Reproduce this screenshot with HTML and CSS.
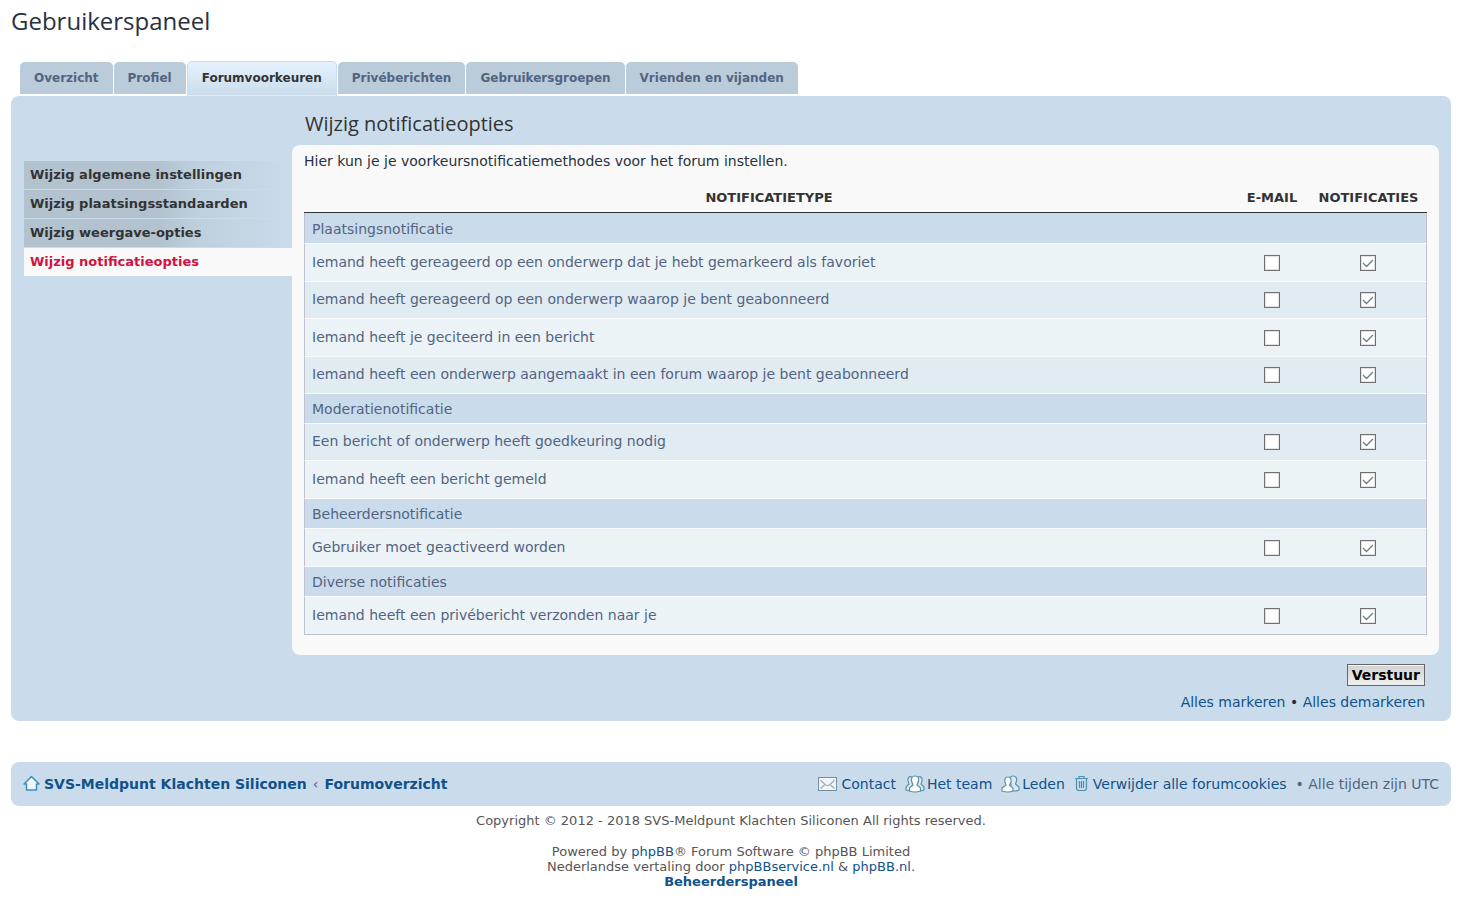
FILE: index.html
```html
<!DOCTYPE html>
<html lang="nl">
<head>
  <meta charset="UTF-8">
  <title>Gebruikerspaneel</title>
  <link rel="stylesheet" href="styles.css">
</head>
<body>

  <h1>Gebruikerspaneel</h1>

  <nav class="tabs">
    <a href="#">Overzicht</a>
    <a href="#">Profiel</a>
    <a href="#" class="active">Forumvoorkeuren</a>
    <a href="#">Privéberichten</a>
    <a href="#">Gebruikersgroepen</a>
    <a href="#">Vrienden en vijanden</a>
  </nav>

  <form class="panel">
    <nav class="menu">
      <a href="#">Wijzig algemene instellingen</a>
      <a href="#">Wijzig plaatsingsstandaarden</a>
      <a href="#">Wijzig weergave-opties</a>
      <a href="#" class="active">Wijzig notificatieopties</a>
    </nav>

    <main class="main">
      <h2>Wijzig notificatieopties</h2>

      <div class="content">
        <p>Hier kun je je voorkeursnotificatiemethodes voor het forum instellen.</p>

        <table>
          <thead>
            <tr>
              <th>Notificatietype</th>
              <th class="email" id="email">E-mail</th>
              <th class="board" id="board">Notificaties</th>
            </tr>
          </thead>
          <tbody>
            <tr class="section"><td colspan="3">Plaatsingsnotificatie</td></tr>
            <tr class="bg1">
              <td id="n1">Iemand heeft gereageerd op een onderwerp dat je hebt gemarkeerd als favoriet</td>
              <td><input type="checkbox" aria-labelledby="n1 email"></td>
              <td><input type="checkbox" aria-labelledby="n1 board" checked></td>
            </tr>
            <tr class="bg2">
              <td id="n2">Iemand heeft gereageerd op een onderwerp waarop je bent geabonneerd</td>
              <td><input type="checkbox" aria-labelledby="n2 email"></td>
              <td><input type="checkbox" aria-labelledby="n2 board" checked></td>
            </tr>
            <tr class="bg1">
              <td id="n3">Iemand heeft je geciteerd in een bericht</td>
              <td><input type="checkbox" aria-labelledby="n3 email"></td>
              <td><input type="checkbox" aria-labelledby="n3 board" checked></td>
            </tr>
            <tr class="bg2">
              <td id="n4">Iemand heeft een onderwerp aangemaakt in een forum waarop je bent geabonneerd</td>
              <td><input type="checkbox" aria-labelledby="n4 email"></td>
              <td><input type="checkbox" aria-labelledby="n4 board" checked></td>
            </tr>
            <tr class="section"><td colspan="3">Moderatienotificatie</td></tr>
            <tr class="bg2">
              <td id="n5">Een bericht of onderwerp heeft goedkeuring nodig</td>
              <td><input type="checkbox" aria-labelledby="n5 email"></td>
              <td><input type="checkbox" aria-labelledby="n5 board" checked></td>
            </tr>
            <tr class="bg1">
              <td id="n6">Iemand heeft een bericht gemeld</td>
              <td><input type="checkbox" aria-labelledby="n6 email"></td>
              <td><input type="checkbox" aria-labelledby="n6 board" checked></td>
            </tr>
            <tr class="section"><td colspan="3">Beheerdersnotificatie</td></tr>
            <tr class="bg1">
              <td id="n7">Gebruiker moet geactiveerd worden</td>
              <td><input type="checkbox" aria-labelledby="n7 email"></td>
              <td><input type="checkbox" aria-labelledby="n7 board" checked></td>
            </tr>
            <tr class="section"><td colspan="3">Diverse notificaties</td></tr>
            <tr class="bg1">
              <td id="n8">Iemand heeft een privébericht verzonden naar je</td>
              <td><input type="checkbox" aria-labelledby="n8 email"></td>
              <td><input type="checkbox" aria-labelledby="n8 board" checked></td>
            </tr>
          </tbody>
        </table>
      </div>

      <div class="actions">
        <button type="button">Verstuur</button>
        <div><a href="#">Alles markeren</a> • <a href="#">Alles demarkeren</a></div>
      </div>
    </main>
  </form>

  <footer>
    <div class="navbar">
      <div class="crumbs">
        <svg width="17" height="18" viewBox="0 0 17 18">
          <path d="M8.500 1.500 16 9H13.500V15H3.500V9H1Z" fill="#f4f4f4" stroke="#3792c0" stroke-width="1.500" stroke-linejoin="round"/>
        </svg>
        <a href="#">SVS-Meldpunt Klachten Siliconen</a>
        <span>‹</span>
        <a href="#">Forumoverzicht</a>
      </div>
      <ul class="links">
        <li>
          <svg width="19" height="15" viewBox="0 0 19 15">
            <rect x=".5" y=".5" width="18" height="13" fill="#f3f5f6" stroke="#6c8fa5"/>
            <path d="M2.500 3 7 7.500Q9.500 9.500 12 7.500L16.500 3M2.500 11.500 6.500 8M16.500 11.500 12.500 8" fill="none" stroke="#9fb0bb" stroke-width="1.300"/>
          </svg>
          <a href="#">Contact</a>
        </li>
        <li class="people">
          <svg width="20" height="18" viewBox="0 0 20 18">
            <g fill="#dce9f1" stroke="#5b91ad" stroke-width="1.200">
              <path d="M7 2C4 1 2.500 3 3 6L4 9 1 12V15L5 16"/>
              <path d="M13 2C16 1 17.500 3 17 6L16 9 19 12V15L15 16"/>
              <path fill="#fff" d="M10 1C7 1 6 3 6.500 6L8 10 4.500 13V16Q10 18 15.500 16V13L12 10 13.500 6C14 3 13 1 10 1Z"/>
            </g>
          </svg>
          <a href="#">Het team</a>
        </li>
        <li class="people">
          <svg width="19" height="18" viewBox="0 0 19 18">
            <g fill="#dce9f1" stroke="#5b91ad" stroke-width="1.200">
              <path d="M12 1C9 1 8.500 3 9 6L10 9 9 15Q14 17 18 15V12L14.500 9 15.500 6C16 3 15 1 12 1Z"/>
              <path fill="#fff" d="M7 2C4 2 3.500 4 4 7L5 10 1 13V16Q7 18 12 16V13L8.500 10 10 7C10.500 4 9.500 2 7 2Z"/>
            </g>
          </svg>
          <a href="#">Leden</a>
        </li>
        <li>
          <svg width="15" height="18" viewBox="0 0 15 18" fill="none" stroke="#4f8fb0" stroke-width="1.200">
            <path d="M1 3.500H14M5 3V1.500H10V3M2.500 4V13Q2.500 15.500 5 15.500H10Q12.500 15.500 12.500 13V4M5.500 6V13M7.500 6V13M9.500 6V13"/>
          </svg>
          <a href="#">Verwijder alle forumcookies</a>
        </li>
        <li>• Alle tijden zijn UTC</li>
      </ul>
    </div>

    <div class="copyright">
      <p>Copyright © 2012 - 2018 SVS-Meldpunt Klachten Siliconen All rights reserved.</p>
      <p>
        Powered by <a href="#">phpBB</a>® Forum Software © phpBB Limited<br>
        Nederlandse vertaling door <a href="#">phpBBservice.nl</a> &amp; <a href="#">phpBB.nl</a>.<br>
        <strong><a href="#">Beheerderspaneel</a></strong>
      </p>
    </div>
  </footer>

</body>
</html>
```
FILE: styles.css
```css
body {
  margin: 0 25px 0 11px;
  background: #fff;
  color: #536482;
  font-family: Verdana, "DejaVu Sans", sans-serif;
  font-size: 14px;
  line-height: 18px;
}

a {
  color: #105289;
  text-decoration: none;
}

a:hover {
  color: #d31141;
  text-decoration: underline;
}

h1, h2 {
  font-family: "Trebuchet MS", "Open Sans", sans-serif;
  font-weight: normal;
}

h1 {
  margin: 0;
  padding: 6px 0 24px;
  color: #28313f;
  font-size: 24px;
  line-height: 30px;
}

h2 {
  margin: 0;
  padding: 16px 13px 9px;
  color: #333;
  font-size: 20px;
  line-height: 24px;
}

/* tabs */
.tabs {
  display: flex;
  align-items: flex-end;
  gap: 1px;
  height: 36px;
  padding-left: 9px;
}

.tabs a {
  margin-bottom: 2px;
  padding: 7px 14px;
  border-radius: 5px 5px 0 0;
  background: #bacbd9;
  color: #536482;
  font-size: 12px;
  font-weight: bold;
}

.tabs .active {
  margin-bottom: 0;
  padding: 7px 14px 8px;
  border: 1px solid #cadceb;
  border-bottom-color: #e0edf8;
  background: linear-gradient(#e4f2fd, #cadceb);
  color: #333;
}

/* main panel */
.panel {
  display: flex;
  background: #cadceb;
  border-radius: 8px;
  padding: 0 12px 0 13px;
}

.menu {
  flex: 0 0 268px;
  padding-top: 65px;
}

.menu a {
  display: block;
  margin-bottom: 1px;
  padding: 5px 6px;
  background: linear-gradient(to right, #b2c2cf 50%, #bed0de 65%, #cadceb);
  color: #333;
  font-size: 13px;
  font-weight: bold;
}

.menu .active {
  background: #f9f9f9;
  color: #d31141;
}

.main {
  flex: 1;
}

.content {
  padding: 7px 12px 20px;
  border-radius: 8px;
  background: #f9f9f9;
}

.content p {
  margin: 0 0 19px;
  color: #28313f;
}

table {
  width: 100%;
  border-collapse: separate;
  border-spacing: 0;
}

th {
  padding: 0 7px 5px;
  border-bottom: 1px solid #333;
  color: #333;
  font-size: 13px;
  text-transform: uppercase;
  white-space: nowrap;
}

.email {
  width: 62px;
}

.board {
  width: 103px;
}

td {
  padding: 0 7px;
  border-top: 1px solid #fafafa;
}

td:first-child {
  border-left: 1px solid #bfc1cf;
}

td:last-child {
  border-right: 1px solid #bfc1cf;
}

tr:last-child td {
  border-bottom: 1px solid #bfc1cf;
}

.section td {
  height: 29px;
  background: #cadceb;
}

.section:first-child td {
  border-top-color: #cadceb;
}

.bg1 td {
  height: 35px;
  padding-bottom: 2px;
  background: #ecf3f7;
}

.bg2 td {
  height: 34px;
  padding-bottom: 2px;
  background: #e1ebf2;
}

input[type="checkbox"] {
  appearance: none;
  display: block;
  width: 16px;
  height: 16px;
  margin: 2px auto 0;
  border: 1px solid #707070;
  background: #fff;
  box-shadow: inset 0 0 0 1px #e2e2e2;
}

input[type="checkbox"]:checked {
  background-image: url("data:image/svg+xml,%3Csvg xmlns='http://www.w3.org/2000/svg' viewBox='0 0 14 14'%3E%3Cpath d='M2 7l3.500 3.500L12 4' fill='none' stroke='%23697f88' stroke-width='1.300'/%3E%3C/svg%3E");
}

.actions {
  padding: 9px 14px 10px;
  color: #28313f;
  text-align: right;
}

.actions button {
  margin-bottom: 7px;
  padding: 1px 4px;
  border: 1px solid #666;
  background: linear-gradient(#d2d2d2, #efefef);
  box-shadow: inset 0 1px 0 #f5f5f5;
  color: #000;
  font: bold 14px/18px Verdana, "DejaVu Sans", sans-serif;
}

/* footer */
.navbar {
  display: flex;
  justify-content: space-between;
  margin-top: 41px;
  padding: 13px 12px;
  border-radius: 8px;
  background: #cadceb;
}

.crumbs, .links, .links li {
  display: flex;
  align-items: center;
}

.crumbs {
  gap: 4px;
  font-weight: bold;
}

.crumbs span {
  padding: 0 2px;
  font-weight: normal;
}

.links {
  gap: 9px;
  margin: 0;
  padding: 0;
  list-style: none;
}

.links li {
  gap: 4px;
}

.links .people {
  gap: 2px;
}

.copyright {
  padding-top: 7px;
  color: #555;
  font-size: 13px;
  line-height: 15px;
  text-align: center;
}

.copyright p {
  margin: 0 0 16px;
}

.copyright p:last-child {
  margin-bottom: 0;
}
```
